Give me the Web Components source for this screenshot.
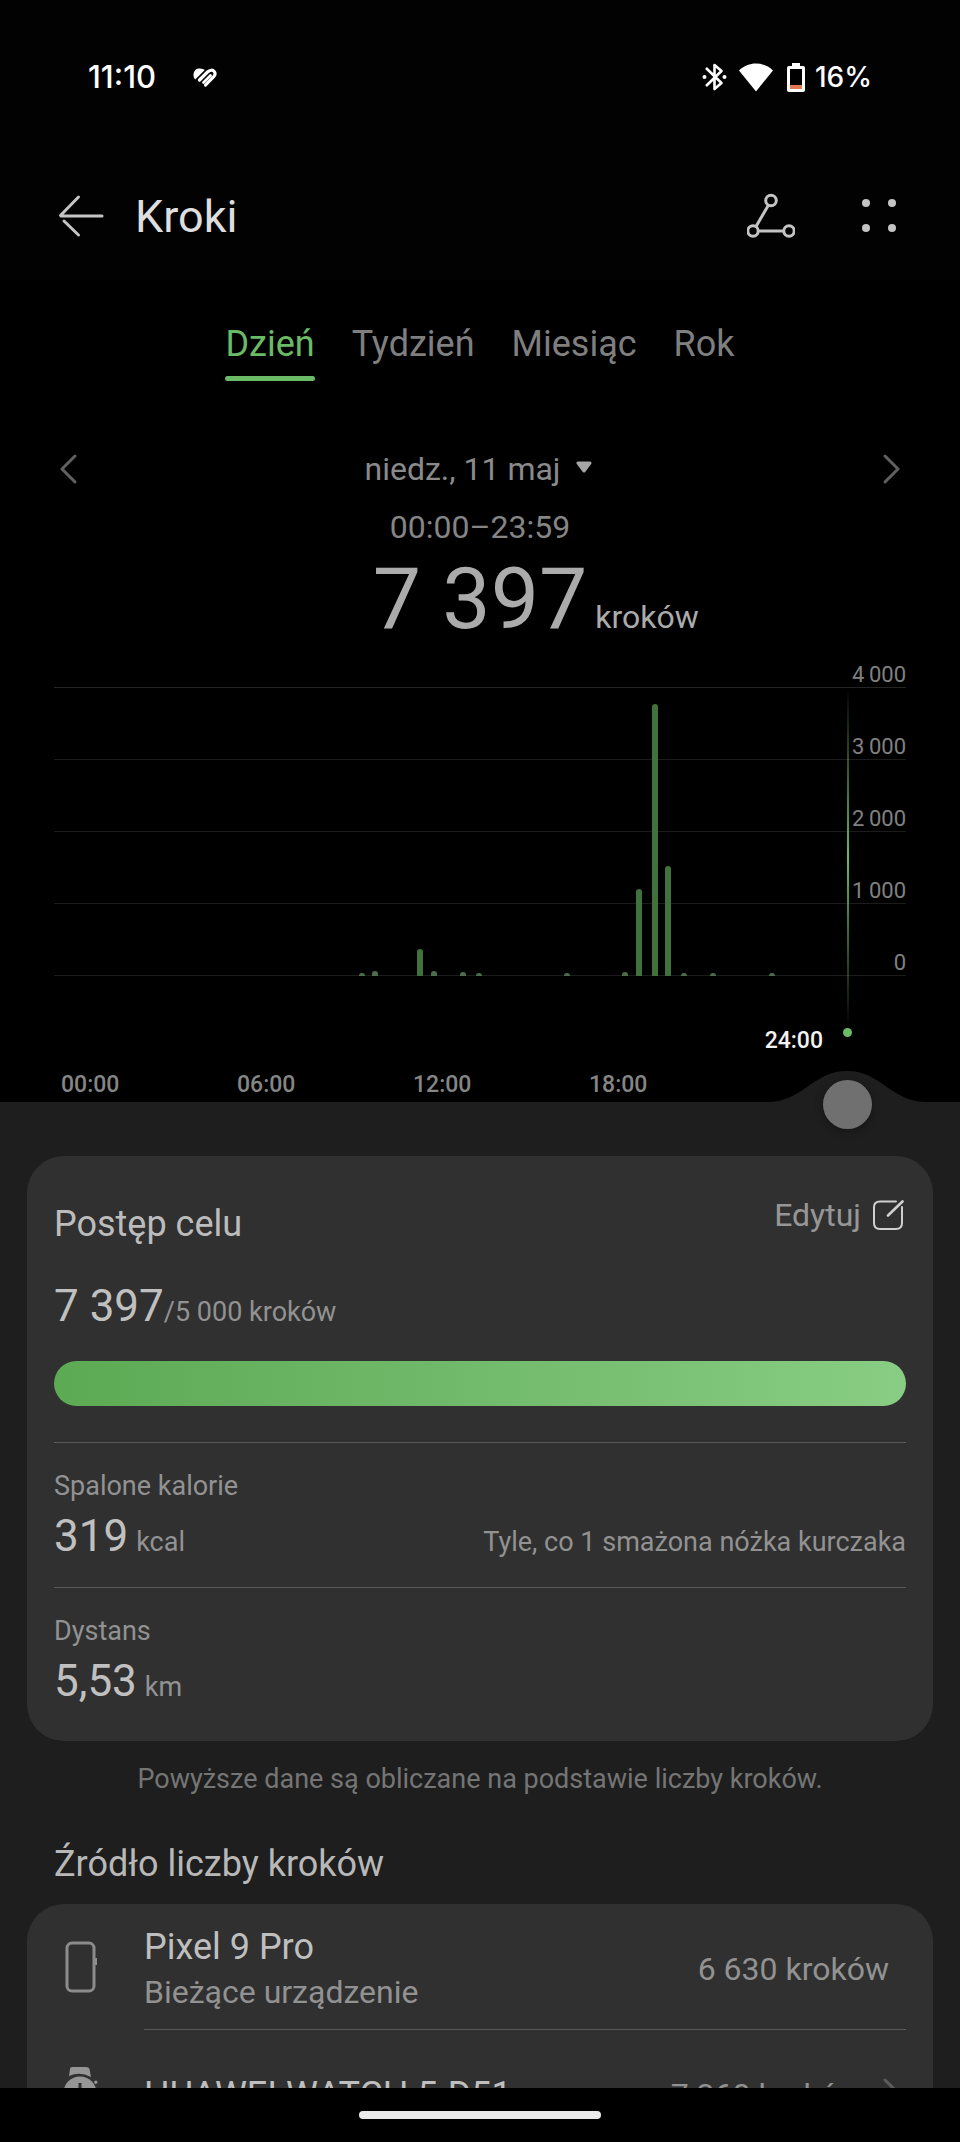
<!DOCTYPE html>
<html lang="pl">
<head>
<meta charset="utf-8">
<meta name="viewport" content="width=device-width, initial-scale=1">
<title>Kroki</title>
<style>
  html, body { height: 100%; margin: 0; background: #000; }
  body { font-family: Roboto, "Noto Sans", sans-serif; color: #bdbdbd; }
</style>
</head>
<body>
<steps-app></steps-app>

<script>
const define = (name, html, setup) => {
  const template = document.createElement('template');
  template.innerHTML = html;
  customElements.define(name, class extends HTMLElement {
    connectedCallback() {
      if (this.shadowRoot) return;
      this.attachShadow({ mode: 'open' }).append(template.content.cloneNode(true));
      if (setup) setup(this, this.shadowRoot);
    }
  });
};

define('status-bar', `
  <style>
    :host { display: flex; align-items: center; padding: 54px 88px 54px; line-height: 46px;
      font-family: Inter, Roboto, sans-serif; font-size: 31px; font-weight: 500; color: #fff; }
    .end { margin-left: auto; display: flex; align-items: center; font-size: 28px; }
    svg { display: block; }
    .app { margin-left: 36px; }
    .wifi { margin: 0 14px 0 12px; }
    .battery { margin-right: 10px; }
  </style>
  <span>11:10</span>
  <svg class="app" width="26" height="24" viewBox="0 0 26 24" fill="none" stroke="#fff" stroke-linecap="round" aria-hidden="true">
    <path d="M3.200 14.500C0 11 1.300 4.300 6.500 3.500C9.500 3.100 11.500 4 12.800 5Z" fill="#fff" stroke="none"/>
    <path d="M7.500 15L15.500 7C17.800 4.800 20.800 4.600 22.300 6.600C23.600 8.500 23 10.300 21.700 11.700L13.600 20" stroke-width="3.200"/>
    <path d="M11.500 17.500L18.500 10.500" stroke-width="2.800"/>
  </svg>
  <span class="end">
    <svg width="25" height="30" viewBox="0 0 25 30" fill="none" stroke="#fff" stroke-width="2.600" role="img" aria-label="Bluetooth">
      <path d="M4 6L19.500 21L12.500 27V3L19.500 9L4 24" stroke-linejoin="round"/>
      <circle cx="2.500" cy="15" r="2" fill="#fff" stroke="none"/><circle cx="22.500" cy="15" r="2" fill="#fff" stroke="none"/>
    </svg>
    <svg class="wifi" width="34" height="30" viewBox="0 0 34 30" role="img" aria-label="Wi-Fi">
      <path fill="#fff" d="M0 8.500C9.500-.8 24.500-.8 34 8.500L17 29.500Z"/>
    </svg>
    <svg class="battery" width="18" height="30" viewBox="0 0 18 30" role="img" aria-label="Bateria">
      <path fill="#fff" d="M5 1h8v3h3q2 0 2 2v22q0 2-2 2H2q-2 0-2-2V6q0-2 2-2h3z"/>
      <path fill="#000" d="M3 7h12v16H3z"/><path fill="#e07a52" d="M3 23h12v4H3z"/>
    </svg>
    <span>16%</span>
  </span>
`);

define('app-header', `
  <style>
    :host { display: flex; align-items: center; height: 126px; padding: 0 57px; box-sizing: border-box; }
    button { display: block; padding: 0; border: 0; background: none; color: #c4c4c4; }
    svg { display: block; }
    h1 { margin: 0 auto 0 30px; font-size: 45px; line-height: 60px; font-weight: 400; color: #dedede; }
    .menu { margin-left: 60px; }
  </style>
  <button aria-label="Wstecz"><svg width="48" height="48" viewBox="0 0 48 48" fill="none" stroke="currentColor" stroke-width="3" stroke-linecap="round">
    <path d="M4 23H45M21.500 4L3.500 22.500M7 28L21.500 42"/></svg></button>
  <h1><slot></slot></h1>
  <button aria-label="Trasa"><svg width="48" height="48" viewBox="0 0 48 48" fill="none" stroke="currentColor" stroke-width="3">
    <circle cx="24" cy="7.500" r="5.300"/><circle cx="6" cy="38" r="5.200"/><circle cx="42" cy="38" r="5.200"/><path d="M21.200 12.500L9 33.500M11.500 38H36.500"/></svg></button>
  <button class="menu" aria-label="Menu"><svg width="48" height="48" viewBox="0 0 48 48" fill="currentColor">
    <circle cx="11" cy="10" r="4"/><circle cx="37" cy="10" r="4"/><circle cx="11" cy="35" r="4"/><circle cx="37" cy="35" r="4"/></svg></button>
`);

define('period-tabs', `
  <style>
    :host { display: flex; justify-content: center; gap: 37px; padding-top: 40px; }
    button { padding: 0; border: 0; background: none; color: #7f7f7f; font: inherit; font-size: 36px; line-height: 48px; }
    button::after { content: ""; display: block; height: 5px; margin-top: 8px; border-radius: 3px; }
    button[aria-selected="true"] { color: #6abb65; }
    button[aria-selected="true"]::after { background: #6abb65; }
  </style>
`, (host, root) => {
  host.setAttribute('role', 'tablist');
  host.getAttribute('items').split(',').forEach((label, i) => {
    const tab = document.createElement('button');
    tab.setAttribute('role', 'tab');
    tab.setAttribute('aria-selected', String(i === 0));
    tab.textContent = label;
    root.append(tab);
  });
});

define('date-picker', `
  <style>
    :host { display: flex; align-items: center; justify-content: space-between; margin-top: 64px; padding: 0 57px; }
    button { display: flex; align-items: center; padding: 0; border: 0; background: none; color: #8a8a8a; font: inherit; font-size: 32px; line-height: 48px; }
    .step { color: #606060; }
    .date { gap: 15px; }
    svg { display: block; }
  </style>
  <button class="step" aria-label="Poprzedni dzień"><svg width="24" height="36" viewBox="0 0 24 36" fill="none" stroke="currentColor" stroke-width="3" stroke-linecap="round" stroke-linejoin="round"><path d="M18 5L5 18L18 31"/></svg></button>
  <button class="date"><slot></slot><svg width="20" height="20" viewBox="0 0 20 20"><path d="M2 4H14L8 12Z" fill="#a6a6a6" stroke="#a6a6a6" stroke-width="3" stroke-linejoin="round"/></svg></button>
  <button class="step" aria-label="Następny dzień"><svg width="24" height="36" viewBox="0 0 24 36" fill="none" stroke="currentColor" stroke-width="3" stroke-linecap="round" stroke-linejoin="round"><path d="M6 5L19 18L6 31"/></svg></button>
`);

define('step-total', `
  <style>
    :host { display: block; margin-top: 12px; text-align: center; }
    .range { font-size: 32px; line-height: 44px; color: #858585; }
    .total { display: grid; grid-template-columns: 1fr auto 1fr; align-items: baseline; column-gap: 8px; text-align: left; color: #ababab; }
    .value { grid-column: 2; font-size: 86px; line-height: 100px; }
    .unit { font-size: 32px; line-height: 32px; }
  </style>
  <div class="range"><slot name="range"></slot></div>
  <div class="total"><span class="value"><slot></slot></span><span class="unit"><slot name="unit"></slot></span></div>
`);

define('step-chart', `
  <style>
    :host { display: block; position: relative; padding: 0 54px 4px; }
    .plot { position: relative; }
    .row { display: flex; align-items: flex-end; justify-content: flex-end; height: 72px; box-sizing: border-box;
      border-bottom: 1px solid #1c1c1c; font-size: 22px; line-height: 24px; color: #808080; }
    .row:first-child { height: 39px; border-color: #242424; }
    .bars { position: absolute; left: 0; bottom: 0; width: 100%; height: 288px; }
    .cursor { position: absolute; right: 108px; top: 39px; bottom: 65px; display: flex; flex-direction: column; align-items: center; width: 9px; }
    .cursor::before { content: ""; flex: 1; width: 2px; background: linear-gradient(#6abb6500, #6abb65 50%, #6abb6500); }
    .cursor::after { content: ""; height: 9px; width: 9px; border-radius: 50%; background: #6abb65; }
    .time { margin-top: 52px; padding-right: 83px; text-align: right; color: #f2f2f2; }
    .time, .axis { font-size: 23px; line-height: 26px; font-weight: 500; }
    .axis { display: grid; grid-template-columns: repeat(4, 1fr); margin-top: 18px; padding: 0 141px 0 7px; color: #858585; }
  </style>
  <div class="plot">
    <div class="row"><span>4&#8201;000</span></div><div class="row"><span>3&#8201;000</span></div><div class="row"><span>2&#8201;000</span></div>
    <div class="row"><span>1&#8201;000</span></div><div class="row"><span>0</span></div>
    <svg class="bars" viewBox="0 0 852 288" preserveAspectRatio="none" role="img" aria-label="Kroki w ciągu dnia"></svg>
  </div>
  <div class="time">24:00</div>
  <div class="axis"><span>00:00</span><span>06:00</span><span>12:00</span><span>18:00</span></div>
  <div class="cursor"></div>
`, (host, root) => {
  // [horizontal position, bar height] for each half hour with recorded steps
  const bars = [[308, 3], [321, 5], [366, 27], [380, 5], [409, 4], [425, 3], [513, 3], [571, 4],
    [585, 87], [601, 272], [614, 110], [630, 3], [659, 3], [718, 3]];
  root.querySelector('.bars').innerHTML = bars.map(([x, h]) => {
    const r = Math.min(3, h);
    return `<path fill="${h < 10 ? '#4c6e4a' : '#41713d'}" d="M${x - 3} 288v${r - h}q0-${r} 3-${r}t3 ${r}v${h - r}z"/>`;
  }).join('');
});

define('time-slider', `
  <style>
    :host { display: block; position: relative; height: 54px; }
    svg { position: absolute; right: 33px; bottom: 100%; display: block; }
    input { position: absolute; left: 119px; right: 88px; top: -22px; width: calc(100% - 207px); height: 49px; margin: 0; background: none; appearance: none; }
    input::-webkit-slider-thumb { appearance: none; width: 49px; height: 49px; border: 0; border-radius: 50%; background: #707070; box-shadow: 0 2px 10px #0005; }
  </style>
  <svg width="160" height="31" viewBox="0 0 160 31" aria-hidden="true"><path fill="#1e1e1e" d="M0 31C36 31 46 0 80 0S124 31 160 31Z"/></svg>
  <input type="range" min="0" max="24" value="24" aria-label="Godzina">
`);

define('goal-card', `
  <style>
    :host { display: block; margin: 0 27px; padding: 44px 27px 9px; border-radius: 37px; background: #303030; }
    header { display: flex; align-items: flex-start; justify-content: space-between; }
    h2 { margin: 0; font-size: 36px; line-height: 48px; font-weight: 400; color: #bcbcbc; }
    button { display: flex; align-items: center; gap: 11px; padding: 0; border: 0; background: none; color: #969696; font: inherit; font-size: 32px; line-height: 30px; }
    svg { display: block; }
    .steps { margin-top: 28px; font-size: 44px; line-height: 60px; color: #c0c0c0; }
    .steps small { font-size: 27px; line-height: 27px; color: #929292; }
    .bar { height: 45px; margin: 25px 0 36px; border-radius: 23px; background: linear-gradient(90deg, #5caa54, #72ba6c 50%, #88cd83); }
  </style>
  <header>
    <h2>Postęp celu</h2>
    <button>Edytuj <svg width="34" height="30" viewBox="0 2 34 30" fill="none" stroke="#d0d0d0" stroke-width="2" stroke-linecap="round">
      <path d="M24 3.500H8Q2 3.500 2 9V25Q2 31 8 31H24Q30 31 30 25V9"/><path d="M16 17.500L30.500 3.500" stroke-width="2.600"/></svg></button>
  </header>
  <div class="steps">7 397<small>/5 000 kroków</small></div>
  <div class="bar" role="progressbar" aria-label="Postęp celu" aria-valuenow="100"></div>
  <slot></slot>
`);

define('metric-row', `
  <style>
    :host { display: block; padding: 24px 0 21px; border-top: 1px solid #5a5a5a; font-size: 27px; color: #929292; }
    .label { margin-bottom: 1px; line-height: 38px; }
    .line { display: flex; align-items: baseline; line-height: 27px; }
    .value { margin-right: 8px; font-size: 44px; line-height: 60px; color: #c0c0c0; }
    .hint { margin-left: auto; }
  </style>
  <div class="label"><slot name="label"></slot></div>
  <div class="line"><span class="value"><slot></slot></span><slot name="unit"></slot><span class="hint"><slot name="hint"></slot></span></div>
`);

define('source-list', `
  <style>
    :host { display: block; margin: 0 27px; border-radius: 37px; background: #303030; }
  </style>
  <slot></slot>
`);

define('source-row', `
  <style>
    :host { display: flex; padding: 0 27px 0 30px; }
    .icon { flex: none; width: 48px; margin-right: 39px; display: grid; place-items: center; }
    .body { flex: 1; display: flex; align-items: center; justify-content: space-between; height: 126px; padding-top: 5px; box-sizing: border-box; border-bottom: 1px solid #5a5a5a; }
    .name { font-size: 36px; line-height: 46px; color: #bfbfbf; white-space: nowrap; }
    .note, .count { font-size: 32px; line-height: 44px; color: #929292; }
    .count { display: flex; align-items: center; margin-right: 17px; white-space: nowrap; }
    svg { display: block; }
    .chevron { display: none; }
    :host([more]) .note { display: none; }
    :host([more]) .count { margin-right: 3px; gap: 17px; }
    :host([more]) .chevron { display: block; }
  </style>
  <div class="icon"><slot name="icon"></slot></div>
  <div class="body">
    <div><div class="name"><slot></slot></div><div class="note"><slot name="note"></slot></div></div>
    <div class="count"><slot name="count"></slot><svg class="chevron" width="24" height="36" viewBox="0 0 24 36" fill="none" stroke="#5c5c5c" stroke-width="3" stroke-linecap="round"><path d="M6 3L20 17L6 31"/></svg></div>
  </div>
`);

define('gesture-bar', `
  <style>
    :host { flex: none; display: grid; place-items: center; height: 54px; background: #000; }
    div { width: 242px; height: 8px; border-radius: 4px; background: #ebebeb; }
  </style>
  <div></div>
`);

define('steps-app', `
  <style>
    :host { display: flex; flex-direction: column; height: 100vh; }
    .top { background: #020202; }
    main { flex: 1; min-height: 0; overflow-y: auto; scrollbar-width: none; }
    .sheet { background: #1e1e1e; padding-bottom: 54px; }
    .info { margin: 19px 27px 0; text-align: center; font-size: 27px; line-height: 38px; color: #757575; }
    h2 { margin: 42px 54px 16px; font-size: 36px; line-height: 48px; font-weight: 400; color: #b8b8b8; }
    svg { display: block; }
  </style>
  <div class="top"><status-bar></status-bar><app-header>Kroki</app-header></div>
  <main>
    <period-tabs items="Dzień,Tydzień,Miesiąc,Rok"></period-tabs>
    <date-picker>niedz., 11 maj</date-picker>
    <step-total><span slot="range">00:00–23:59</span>7 397<span slot="unit">kroków</span></step-total>
    <step-chart></step-chart>
    <div class="sheet">
      <time-slider></time-slider>
      <goal-card>
        <metric-row><span slot="label">Spalone kalorie</span>319<span slot="unit">kcal</span><span slot="hint">Tyle, co 1 smażona nóżka kurczaka</span></metric-row>
        <metric-row><span slot="label">Dystans</span>5,53<span slot="unit">km</span></metric-row>
      </goal-card>
      <p class="info">Powyższe dane są obliczane na podstawie liczby kroków.</p>
      <h2>Źródło liczby kroków</h2>
      <source-list>
        <source-row>
          <svg slot="icon" width="32" height="52" viewBox="0 0 32 52" fill="none" stroke="#8c8c8c" stroke-width="3" aria-hidden="true">
            <rect x="2" y="2" width="27" height="48" rx="5"/><path d="M31 17V24"/></svg>
          Pixel 9 Pro<span slot="note">Bieżące urządzenie</span><span slot="count">6 630 kroków</span>
        </source-row>
        <source-row more>
          <svg slot="icon" width="34" height="52" viewBox="0 0 34 52" fill="#959595" aria-hidden="true">
            <path d="M8 0H22Q25 0 25.500 2L27 10Q16 4 5 9L6 2Q6 0 8 0Z"/><circle cx="16" cy="26" r="16.500"/>
            <path d="M8 52H24L27 42Q16 47 5 42Z"/><path d="M31 14L32.500 16.500" stroke="#959595" stroke-width="3"/>
            <path d="M16 16V27H23" fill="none" stroke="#303030" stroke-width="3"/></svg>
          HUAWEI WATCH 5-D51<span slot="count">7 360 kroków</span>
        </source-row>
      </source-list>
    </div>
  </main>
  <gesture-bar></gesture-bar>
`);
</script>
</body>
</html>
